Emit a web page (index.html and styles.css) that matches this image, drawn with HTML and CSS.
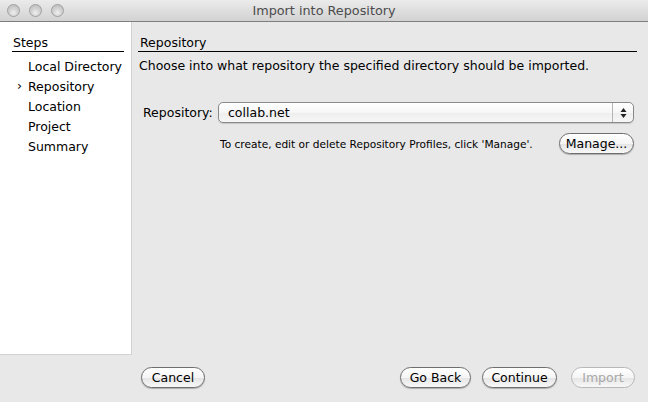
FILE: index.html
```html
<!DOCTYPE html>
<html>
<head>
<meta charset="utf-8">
<title>Import into Repository</title>
<link rel="stylesheet" href="styles.css">
</head>
<body>
<div class="window">
  <div class="titlebar">
    <div class="lights">
      <span class="light"></span><span class="light"></span><span class="light"></span>
    </div>
    <div class="title">Import into Repository</div>
  </div>
  <div class="main">
    <div class="sidebar">
      <div class="steps-title">Steps</div>
      <ul class="steps">
        <li>Local Directory</li>
        <li class="current">Repository</li>
        <li>Location</li>
        <li>Project</li>
        <li>Summary</li>
      </ul>
    </div>
    <div class="content">
      <div class="heading">Repository</div>
      <p class="desc">Choose into what repository the specified directory should be imported.</p>
      <div class="field-row">
        <label class="label">Repository:</label>
        <div class="select">
          <span class="select-value">collab.net</span>
          <span class="select-arrows">
            <svg width="7" height="12" viewBox="0 0 7 12"><path d="M3.5 1 L6.5 5 L0.5 5 Z" fill="#222"/><path d="M3.5 11 L6.5 7 L0.5 7 Z" fill="#222"/></svg>
          </span>
        </div>
      </div>
      <div class="hint-row">
        <span class="hint">To create, edit or delete Repository Profiles, click 'Manage'.</span>
        <button class="btn manage">Manage...</button>
      </div>
    </div>
  </div>
  <div class="footer">
    <button class="btn cancel">Cancel</button>
    <div class="spacer"></div>
    <button class="btn goback">Go Back</button>
    <button class="btn continue">Continue</button>
    <button class="btn disabled">Import</button>
  </div>
</div>
</body>
</html>
```

FILE: styles.css
```css
* { box-sizing: border-box; }
html, body {
  margin: 0;
  padding: 0;
}
body {
  width: 648px;
  height: 402px;
  background: #e8e8e8;
  font-family: "DejaVu Sans", "Liberation Sans", sans-serif;
  font-size: 12.5px;
  color: #000;
  overflow: hidden;
}
.window {
  display: flex;
  flex-direction: column;
  height: 402px;
}
.titlebar {
  height: 22px;
  flex: none;
  display: flex;
  align-items: center;
  position: relative;
  background: linear-gradient(#ebebeb, #d2d2d2);
  border-bottom: 1px solid #7e7e7e;
}
.lights {
  display: flex;
  gap: 9px;
  padding-left: 7px;
  margin-top: -1px;
}
.light {
  width: 13px;
  height: 13px;
  border-radius: 50%;
  background: radial-gradient(circle at 50% 70%, #f0f0f0 0%, #d2d2d2 45%, #b8b8b8 100%);
  border: 1px solid #a0a0a0;
}
.title {
  position: absolute;
  left: 0;
  right: 0;
  top: 3px;
  text-align: center;
  font-size: 12.8px;
  color: #4c4c4c;
}
.main {
  display: flex;
  height: 333px;
  flex: none;
}
.sidebar {
  width: 132px;
  flex: none;
  background: #fff;
  border-right: 1px solid #d2d2d2;
  border-bottom: 1px solid #d2d2d2;
  padding: 13px 7px 0 12px;
}
.steps-title {
  font-size: 12.5px;
  line-height: 16px;
  padding-left: 1px;
  border-bottom: 1px solid #000;
}
.steps {
  list-style: none;
  margin: 5px 0 0;
  padding: 0 0 0 16px;
}
.steps li {
  font-size: 12.5px;
  line-height: 20px;
  white-space: nowrap;
  position: relative;
}
.steps li.current::before {
  content: "›";
  position: absolute;
  left: -11px;
  top: -1px;
}
.content {
  flex: 1;
  padding: 13px 11px 0 6px;
}
.heading {
  font-size: 12.5px;
  line-height: 16px;
  padding-left: 2px;
  border-bottom: 1px solid #000;
}
.desc {
  margin: 4px 0 0 1px;
  line-height: 20px;
  white-space: nowrap;
}
.field-row {
  display: flex;
  align-items: center;
  margin: 26px 3px 0 0;
}
.label {
  width: 80px;
  padding-left: 5px;
}
.select {
  flex: 1;
  height: 21px;
  display: flex;
  align-items: center;
  border: 1px solid #8a8a8a;
  border-radius: 5px;
  background: linear-gradient(#ffffff, #f6f6f6 50%, #ededed 51%, #f7f7f7);
  box-shadow: 0 1px 1px rgba(0,0,0,0.15);
}
.select-value {
  flex: 1;
  padding-left: 9px;
}
.select-arrows {
  width: 21px;
  height: 100%;
  border-left: 1px solid #b5b5b5;
  display: flex;
  align-items: center;
  justify-content: center;
}
.hint-row {
  display: flex;
  align-items: center;
  margin: 10px 3px 0 0;
  padding-left: 82px;
}
.hint {
  flex: 1;
  font-size: 10.6px;
  white-space: nowrap;
}
.btn {
  font-family: inherit;
  font-size: 12.5px;
  height: 21px;
  padding: 0;
  border: 1px solid #6e6e6e;
  border-radius: 11px;
  background: linear-gradient(#ffffff, #f5f5f5 50%, #e4e4e4 51%, #f8f8f8);
  box-shadow: 0 1px 1px rgba(0,0,0,0.25);
  color: #000;
  line-height: 19px;
}
.manage { width: 75px; }
.footer {
  flex: 1;
  display: flex;
  align-items: flex-start;
  padding: 12px 13px 0 141px;
}
.spacer { flex: 1; }
.cancel { width: 64px; }
.goback { width: 71px; margin-right: 11px; }
.continue { width: 75px; margin-right: 14px; }
.disabled {
  width: 64px;
  color: #a8a8a8;
  border-color: #b8b8b8;
  box-shadow: none;
}
```
